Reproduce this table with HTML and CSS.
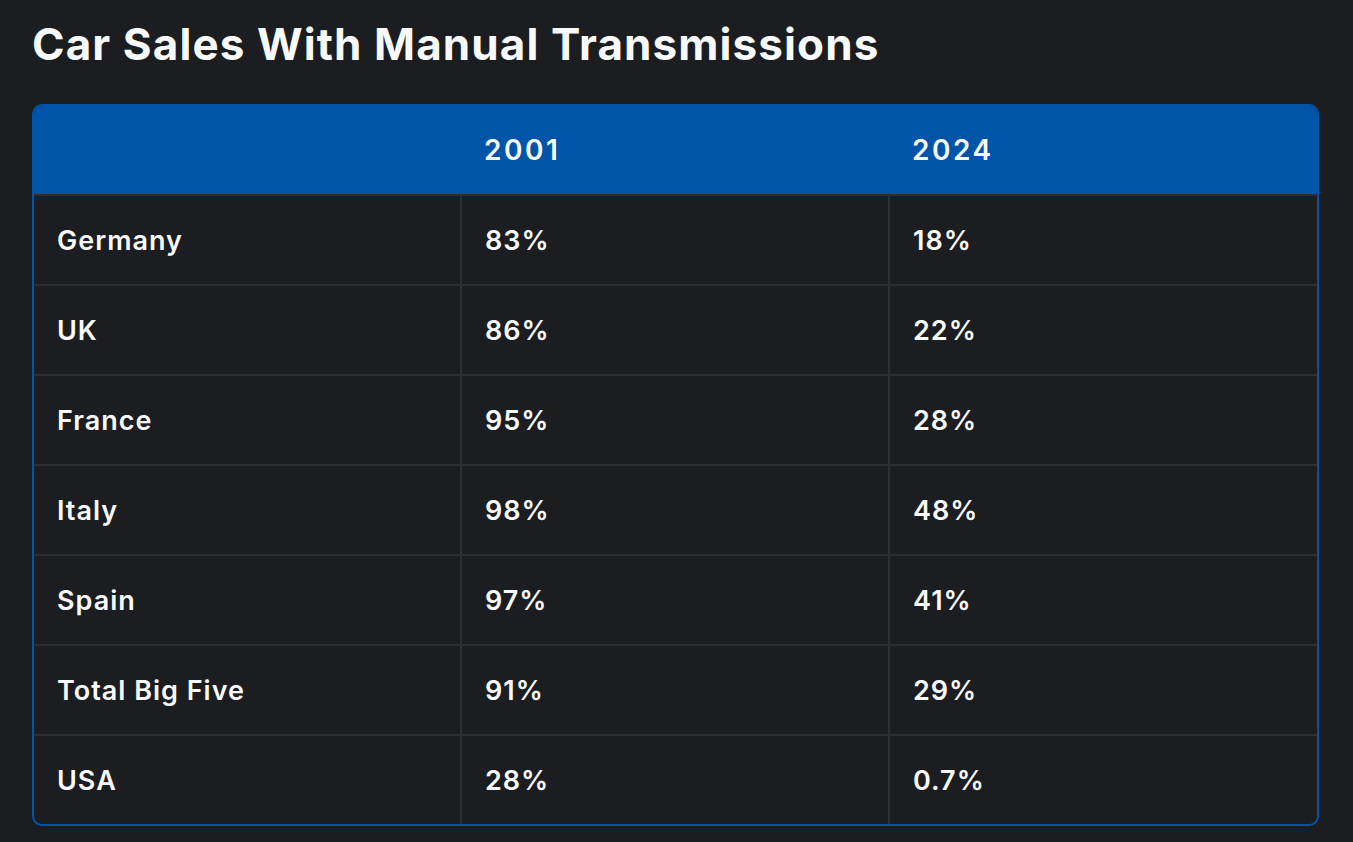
FILE: index.html
```html
<!DOCTYPE html>
<html lang="en">
<head>
<meta charset="utf-8">
<title>Car Sales With Manual Transmissions</title>
<link rel="stylesheet" href="styles.css">
</head>
<body>
<main class="page">
  <h1 class="title">Car Sales With Manual Transmissions</h1>
  <div class="table">
    <div class="row head">
      <div class="cell"></div>
      <div class="cell">2001</div>
      <div class="cell">2024</div>
    </div>
    <div class="row">
      <div class="cell">Germany</div>
      <div class="cell">83%</div>
      <div class="cell">18%</div>
    </div>
    <div class="row">
      <div class="cell">UK</div>
      <div class="cell">86%</div>
      <div class="cell">22%</div>
    </div>
    <div class="row">
      <div class="cell">France</div>
      <div class="cell">95%</div>
      <div class="cell">28%</div>
    </div>
    <div class="row">
      <div class="cell">Italy</div>
      <div class="cell">98%</div>
      <div class="cell">48%</div>
    </div>
    <div class="row">
      <div class="cell">Spain</div>
      <div class="cell">97%</div>
      <div class="cell">41%</div>
    </div>
    <div class="row">
      <div class="cell">Total Big Five</div>
      <div class="cell">91%</div>
      <div class="cell">29%</div>
    </div>
    <div class="row">
      <div class="cell">USA</div>
      <div class="cell">28%</div>
      <div class="cell">0.7%</div>
    </div>
  </div>
</main>
</body>
</html>
```

FILE: styles.css
```css
html, body {
  margin: 0;
  padding: 0;
  background: #1b1d20;
}

body {
  font-family: Inter, "Noto Sans", sans-serif;
  color: #f8f9fa;
}

.page {
  padding: 16px 34px 0 32px;
}

.title {
  margin: 0 0 32px 0;
  font-family: Inter, sans-serif;
  font-weight: 700;
  font-size: 44px;
  line-height: 56px;
  letter-spacing: 1.1px;
  color: #f8f9fa;
}

.table {
  border: 2px solid #0055aa;
  border-radius: 10px;
  overflow: hidden;
}

.row {
  display: grid;
  grid-template-columns: 426px 428px 1fr;
  height: 88px;
  border-top: 2px solid #2d2f32;
}

.row.head {
  background: #0055aa;
  border-top: none;
}

.cell {
  display: flex;
  align-items: center;
  padding-left: 23px;
  font-size: 27px;
  font-weight: 600;
  letter-spacing: 1px;
}

.row .cell + .cell {
  border-left: 2px solid #2d2f32;
}

.row.head .cell + .cell {
  border-left: 2px solid #0055aa;
}

.row.head .cell {
  padding-left: 22px;
  font-size: 28px;
  letter-spacing: 2.5px;
}
```
